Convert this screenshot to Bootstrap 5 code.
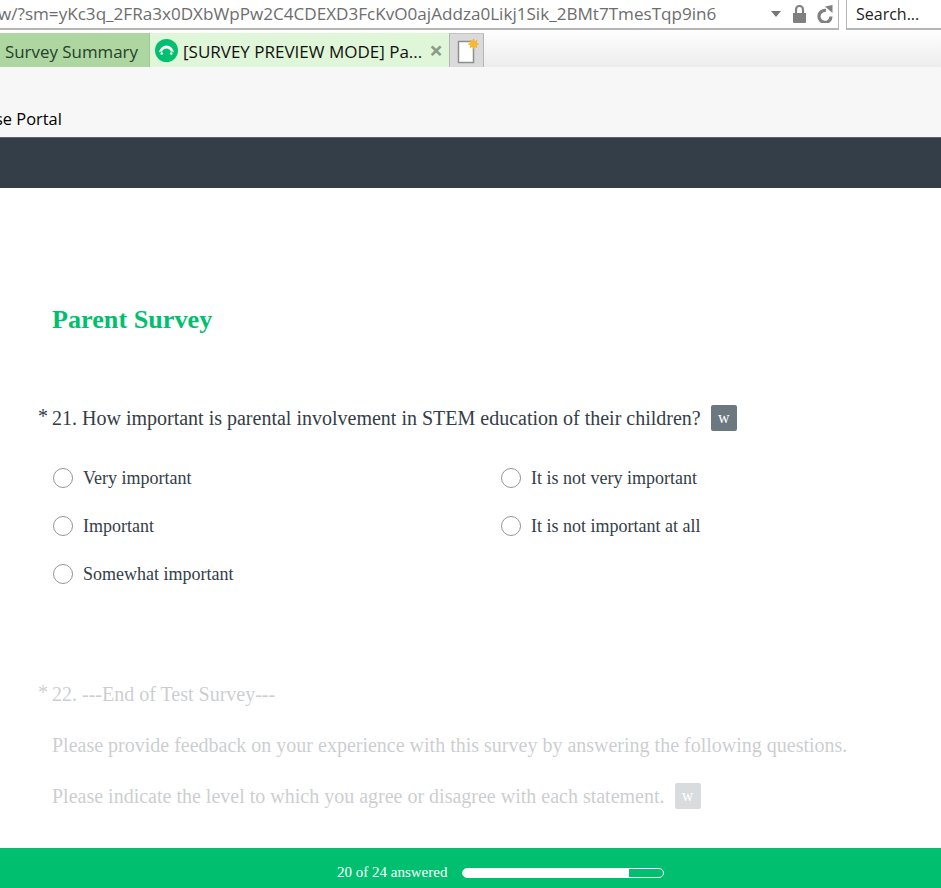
<!DOCTYPE html>
<html lang="en"><head><meta charset="utf-8"><title>Parent Survey</title>
<link rel="stylesheet" href="https://cdn.jsdelivr.net/npm/bootstrap@5.3.0/dist/css/bootstrap.min.css">
<style>
html,body{height:888px;overflow:hidden}
body{width:941px;background:#fff;font-family:"Liberation Serif",serif;color:#333e48}
.ui{font-family:"Open Sans","Noto Sans",sans-serif}
.addr-row{height:30px;background:#fff}
.addr{width:839px;height:30px;border:solid #b5b5b5;border-width:0 1px 2px 0;padding-right:5px;overflow:hidden}
.addr-url{font-size:17.1px;color:#6d6d6d;white-space:nowrap;flex:1;margin-left:-2px}
.ic-a{margin-right:12px}
.ic-b{margin-right:11px}
.srch{width:95px;height:30px;margin-left:7px;border:solid #b5b5b5;border-width:0 0 2px 1px;font-size:16px;color:#222;padding-left:9px}
.tabs{height:37px;background:linear-gradient(#fff,#ececec)}
.tab-a{width:150px;height:34px;background:#aed6a0;color:#25412b;font-size:16.9px;padding-left:5px;border-right:1px solid #9cc98f;white-space:nowrap}
.tab-b{width:300px;height:34px;background:#e0f6d8;color:#111;font-size:17px;padding-left:5px;padding-right:6px;border-right:1px solid #b5b5b5;white-space:nowrap}
.tab-t{padding-top:3px}
.tab-ic{margin-right:5px;flex:none}
.tab-x{color:#8c9a8c;font-size:24px;font-weight:700;margin-left:auto;line-height:1}
.tab-n{width:34px;height:34px;background:#dadada;border-right:1px solid #b5b5b5;border-top:1px solid #c4c4c4}
.topnav{height:70px;background:#f7f7f7;overflow:hidden;color:#000;font-size:16.4px;padding-bottom:6px;line-height:24px;white-space:nowrap}
.topnav span{margin-left:-5px}
.darkbar{height:51px;background:#333e48;border-top:1px solid #5b646c}
.sv{padding:117px 0 0 52px}
.sv-title{font-size:26.2px;font-weight:700;color:#00bf6f;line-height:30px;margin:0}
.qtitle{font-size:20px;line-height:26px;margin-top:70px;white-space:nowrap}
.req{width:14px;margin-left:-14px;display:inline-block;font-size:20px;position:relative;top:-2px}
.wbadge{display:inline-block;width:26px;height:26px;background:#6b787f;color:#fff;font-size:16px;line-height:26px;text-align:center;border-radius:2px;margin-left:10px;vertical-align:top}
.opts{display:grid;grid-template-columns:448px 1fr;margin-top:23px}
.opt{height:48px;font-size:18px}
.dot{width:20px;height:20px;border:1px solid #8f969b;border-radius:50%;margin:0 10px 0 1px;background:#fff;flex:none}
.faded{opacity:.25}
.q22{margin-top:83px;font-size:20px}
.q22 .ln{line-height:26px;white-space:nowrap}
.ln2{margin-top:25px}
.ln3{margin-top:25px}
.footbar{height:40px;background:#00bf6f;color:#fff;font-size:15px;padding:9px 0 0 337px;position:fixed;left:0;right:0;bottom:0}
.pg{width:202px;height:10px;margin-left:15px;border:1px solid #fff;border-radius:5px;overflow:hidden}
.pg-fill{height:100%;background:#fff}
</style></head><body>
<div class="d-flex addr-row ui">
 <div class="addr d-flex align-items-center"><span class="addr-url">w/?sm=yKc3q_2FRa3x0DXbWpPw2C4CDEXD3FcKvO0ajAddza0Likj1Sik_2BMt7TmesTqp9in6</span>
 <svg width="10" height="6" viewBox="0 0 10 6" class="ic-a"><path d="M0 0h10L5 6z" fill="#777"/></svg>
 <svg width="13" height="18" viewBox="0 0 13 18" class="ic-b"><path d="M0 8h13v9a1 1 0 0 1-1 1H1a1 1 0 0 1-1-1z" fill="#808080"/><path d="M3 8V4.500a3.500 3.500 0 0 1 7 0V8" fill="none" stroke="#808080" stroke-width="2.200"/></svg>
 <svg width="16" height="18" viewBox="0 0 16 18"><path d="M9 5.500A6 6 0 1 0 14 11.500" fill="none" stroke="#808080" stroke-width="3.200"/><path d="M8 1.500L15.500 0V8z" fill="#808080"/></svg></div>
 <div class="srch d-flex align-items-center">Search...</div>
</div>
<div class="tabs d-flex align-items-end ui">
 <div class="tab-a d-flex align-items-center"><span class="tab-t">Survey Summary</span></div>
 <div class="tab-b d-flex align-items-center">
  <svg width="23" height="23" viewBox="0 0 23 23" class="tab-ic"><circle cx="11.500" cy="11.500" r="11.500" fill="#00bf6f"/><path d="M4 13.500c.8-3.800 3.800-7 7.500-7s6.700 3.200 7.500 7c-.9-.9-2-1.100-3-.7-.6-2-2.300-3.300-4.500-3.300S7.600 10.800 7 12.800c-1-.4-2.100-.2-3 .7z" fill="#fff"/><circle cx="6.800" cy="14.500" r="1.300" fill="#fff"/><circle cx="16.200" cy="14.500" r="1.300" fill="#fff"/></svg>
  <span class="tab-t">[SURVEY PREVIEW MODE] Pa...</span><span class="tab-x">×</span>
 </div>
 <div class="tab-n d-flex align-items-center justify-content-center">
  <svg width="24" height="26" viewBox="0 0 24 26"><path d="M3.500 3.500h15v21h-15z" fill="#fff" stroke="#8f8f8f" stroke-width="1.500"/><path d="M18.500 1v10M13.500 6h10M15 2.500l7 7M22 2.500l-7 7" stroke="#f6a81c" stroke-width="1.300"/><circle cx="18.500" cy="6" r="3.500" fill="#fbb72c"/></svg>
 </div>
</div>
<div class="topnav d-flex align-items-end ui"><span>se Portal</span></div>
<div class="darkbar"></div>
<main class="sv">
 <h1 class="sv-title">Parent Survey</h1>
 <div class="qtitle"><span class="req">*</span>21. How important is parental involvement in STEM education of their children?<span class="wbadge">w</span></div>
 <div class="opts">
  <div class="opt d-flex align-items-center"><span class="dot"></span>Very important</div>
  <div class="opt d-flex align-items-center"><span class="dot"></span>It is not very important</div>
  <div class="opt d-flex align-items-center"><span class="dot"></span>Important</div>
  <div class="opt d-flex align-items-center"><span class="dot"></span>It is not important at all</div>
  <div class="opt d-flex align-items-center"><span class="dot"></span>Somewhat important</div>
 </div>
 <div class="q22 faded">
  <div class="ln"><span class="req">*</span>22. ---End of Test Survey---</div>
  <div class="ln ln2">Please provide feedback on your experience with this survey by answering the following questions.</div>
  <div class="ln ln3">Please indicate the level to which you agree or disagree with each statement.<span class="wbadge">w</span></div>
 </div>
</main>
<footer class="footbar d-flex align-items-center">20 of 24 answered
 <div class="pg"><div class="pg-fill" style="width:82.7%"></div></div>
</footer>
</body></html>
